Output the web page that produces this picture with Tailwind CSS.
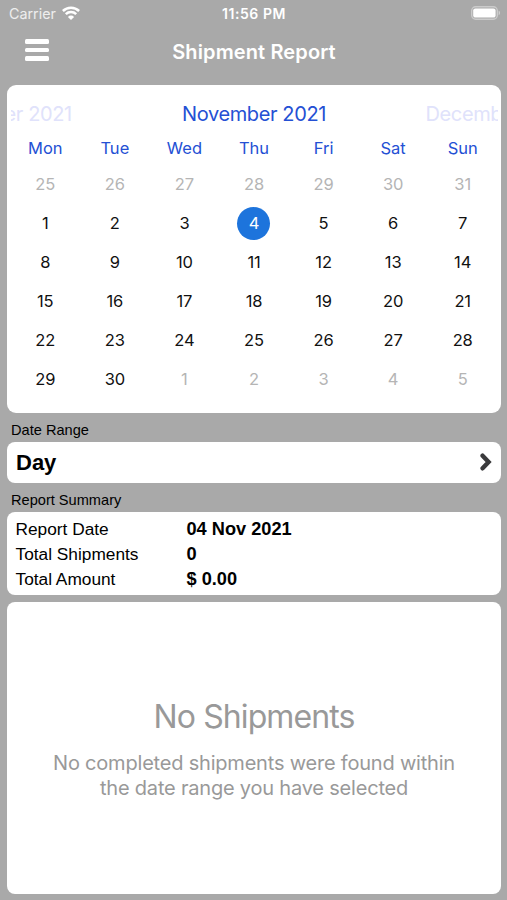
<!DOCTYPE html>
<html lang="en">
<head>
    <meta charset="UTF-8">
    <meta name="viewport" content="width=device-width, initial-scale=1.0">
    <title>Shipment Report</title>
    <script src="https://cdn.jsdelivr.net/npm/@tailwindcss/browser@4"></script>
</head>
<body class="bg-[#a9a9a9] font-['Inter',sans-serif] text-black">
    <div class="flex flex-col h-[900px] pl-[7px] pr-[6px] pb-[6px] overflow-hidden">
        <!-- Status bar -->
        <div class="grid grid-cols-3 items-center h-[27px] text-white leading-[27px]">
            <div class="flex items-center pl-[2px]">
                <span class="text-[14.3px] text-white/80">Carrier</span>
                <svg class="ml-[6px] -mt-[2px] w-[18px] h-[14px]" viewBox="0 0 18 14" fill="none" stroke="currentColor" stroke-width="2.5">
                    <path d="M.9 5a11.6 11.6 0 0 1 16.2 0"/>
                    <path d="M3.8 8.2a7.4 7.4 0 0 1 10.4 0"/>
                    <path d="M9 14 5.9 10.9a4.4 4.4 0 0 1 6.2 0z" fill="currentColor" stroke="none"/>
                </svg>
            </div>
            <span class="text-center font-semibold text-[14px] tracking-[0.55px] whitespace-nowrap">11:56 PM</span>
            <svg class="justify-self-end -mt-[1px] w-[30px] h-[14px]" viewBox="0 0 30 14">
                <rect x=".7" y=".7" width="25.6" height="12.6" rx="4" fill="none" stroke="#fff" stroke-opacity=".4" stroke-width="1.4"/>
                <rect x="2.2" y="2.4" width="22.4" height="9.2" rx="2.2" fill="#fff"/>
                <path d="M27.7 4.8c1.6.6 1.6 3.8 0 4.4z" fill="#fff" fill-opacity=".5"/>
            </svg>
        </div>

        <!-- Nav bar -->
        <div class="grid grid-cols-[1fr_auto_1fr] items-center h-[58px] shrink-0 pb-[8px] text-white">
            <button class="ml-[18px] -mt-[4px] flex flex-col gap-[4.4px] w-[24px]">
                <span class="h-[4.2px] w-full rounded-[1.5px] bg-white"></span>
                <span class="h-[4.2px] w-full rounded-[1.5px] bg-white"></span>
                <span class="h-[4.2px] w-full rounded-[1.5px] bg-white"></span>
            </button>
            <h1 class="text-[20px] font-semibold tracking-[0.12px]">Shipment Report</h1>
        </div>

        <!-- Calendar -->
        <div class="h-[328px] shrink-0 rounded-[9px] bg-white px-[3.5px]">
            <div class="flex justify-center h-[58px] overflow-hidden text-[20px] tracking-[-0.38px] leading-[59px] text-[#e0e2fb] text-center whitespace-nowrap">
                <span class="w-[243.5px] shrink-0">October 2021</span>
                <span class="w-[243.5px] shrink-0 text-[#2450d4]">November 2021</span>
                <span class="w-[243.5px] shrink-0">December 2021</span>
            </div>
            <div class="grid grid-cols-7 h-[22px] text-center text-[16.5px] leading-[11px] text-[#2450d4]">
                <span>Mon</span>
                <span>Tue</span>
                <span>Wed</span>
                <span>Thu</span>
                <span>Fri</span>
                <span>Sat</span>
                <span>Sun</span>
            </div>
            <div id="days" class="grid grid-cols-7 auto-rows-[39px] place-items-center text-[16.5px] tracking-[-0.1px]"></div>
        </div>

        <!-- Date range -->
        <h2 class="mt-[7px] pl-[4px] h-[22px] shrink-0 font-['Liberation_Sans',sans-serif] text-[14.6px] leading-[21px]">Date Range</h2>
        <div class="flex items-center justify-between h-[40.5px] shrink-0 rounded-[8px] bg-white pl-[9px] pr-[9.5px] font-['Liberation_Sans',sans-serif]">
            <span class="text-[22px] font-bold">Day</span>
            <svg class="w-[12px] h-[18px]" viewBox="0 0 12 18" fill="none" stroke="#3a3a3c" stroke-width="4.4" stroke-linecap="round">
                <path d="M2.6 2.7 8.6 9l-6 6.3"/>
            </svg>
        </div>

        <!-- Summary -->
        <h2 class="mt-[7px] pl-[4px] h-[22px] shrink-0 font-['Liberation_Sans',sans-serif] text-[14.6px] leading-[21px]">Report Summary</h2>
        <dl class="grid grid-cols-[171px_1fr] auto-rows-[25.2px] content-start h-[83.5px] shrink-0 rounded-[8px] bg-white pl-[8.5px] pt-[5px] font-['Liberation_Sans',sans-serif] text-[17.3px] leading-[25.2px]">
            <dt>Report Date</dt>
            <dd class="text-[18.2px] font-bold">04 Nov 2021</dd>
            <dt>Total Shipments</dt>
            <dd class="text-[18.2px] font-bold">0</dd>
            <dt>Total Amount</dt>
            <dd class="text-[18.2px] font-bold">$ 0.00</dd>
        </dl>

        <!-- Empty state -->
        <div class="mt-[7px] grow flex flex-col items-center rounded-[8px] bg-white pt-[95px] text-center text-[#999]">
            <p class="text-[32px] leading-[40px] tracking-[-0.9px]">No Shipments</p>
            <p class="mt-[14px] text-[20px] leading-[24.5px] tracking-[-0.2px]">No completed shipments were found within<br>the date range you have selected</p>
        </div>
    </div>
    <script>
        var selected = 4;
        var html = '';
        // November 2021 starts on a Monday, the week before it is shown too
        for (var i = -6; i <= 35; i++) {
            var day = i < 1 ? i + 31 : i > 30 ? i - 30 : i;
            var cls = i < 1 || i > 30 ? 'text-[#b5b5b5]' : 'text-[#111]';
            if (i === selected) {
                cls = 'flex items-center justify-center w-[33px] h-[33px] rounded-full bg-[#1d74dc] text-white';
            }
            html += '<span class="' + cls + '">' + day + '</span>';
        }
        document.getElementById('days').innerHTML = html;
    </script>
</body>
</html>
